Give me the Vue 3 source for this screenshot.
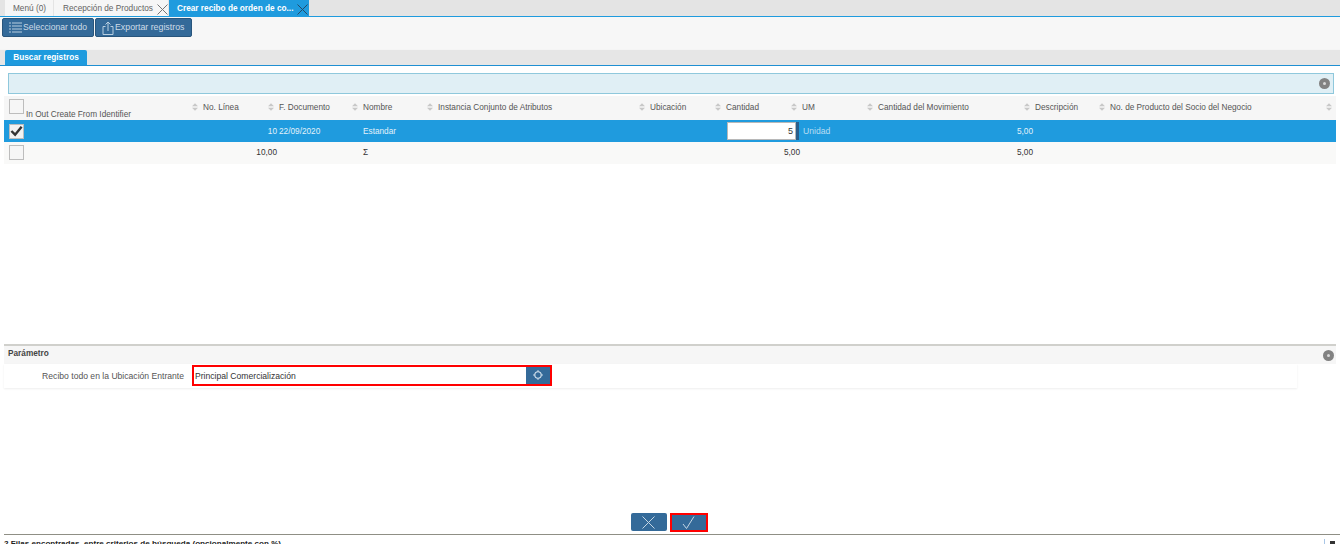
<script setup>
const columns = [
  'In Out Create From Identifier', 'No. Línea', 'F. Documento', 'Nombre',
  'Instancia Conjunto de Atributos', 'Ubicación', 'Cantidad', 'UM',
  'Cantidad del Movimiento', 'Descripción', 'No. de Producto del Socio del Negocio'
]
</script>

<template>
  <div class="page">
    <nav class="tabs">
      <div class="tab first">Menú (0)</div>
      <div class="tab second">
        <span>Recepción de Productos</span>
        <svg class="x" viewBox="0 0 11 11"><path d="M.5.5l10 10M10.5.5l-10 10" stroke="#777" fill="none" /></svg>
      </div>
      <div class="tab active">
        <span>Crear recibo de orden de co...</span>
        <svg class="x" viewBox="0 0 11 11"><path d="M.5.5l10 10M10.5.5l-10 10" stroke="#244a68" fill="none" /></svg>
      </div>
    </nav>

    <div class="toolbar">
      <button class="tool list-tool">
        <svg width="13" height="11" viewBox="0 0 13 11"><path d="M0 1h2M3 1h10M0 4h2M3 4h10M0 7h2M3 7h10M0 10h2M3 10h10" stroke="#b9cfe0" fill="none" /></svg>
        <span>Seleccionar todo</span>
      </button>
      <button class="tool export-tool">
        <svg width="12" height="14" viewBox="0 0 12 14"><path d="M3.500 5.500H1v8h10v-8H8.500M6 10V1M3.500 3.500L6 1l2.500 2.500" stroke="#b9cfe0" fill="none" /></svg>
        <span>Exportar registros</span>
      </button>
    </div>

    <div class="subtabs"><div class="subtab">Buscar registros</div></div>

    <div class="north">
      <span class="collapse"><i></i></span>
    </div>

    <section class="grid">
      <div class="row head">
        <div v-for="(c, i) in columns" :key="c" class="cell" :class="{ firsthead: i === 0 }">
          <span v-if="i === 0" class="check head-check"></span>
          <span class="label">{{ c }}</span>
          <svg class="sort" width="6" height="8" viewBox="0 0 7 9"><path d="M3.500 0L7 3.500H0zM3.500 9L0 5.500h7z" fill="#c8c8c8" /></svg>
        </div>
      </div>
      <div class="row selected">
        <div class="cell"><span class="check">
          <svg width="14" height="12" viewBox="0 0 14 12"><path d="M1.500 6l4 4L12.500 1.500" stroke="#333" stroke-width="2.600" fill="none" /></svg>
        </span></div>
        <div class="cell right">10</div>
        <div class="cell">22/09/2020</div>
        <div class="cell">Estandar</div>
        <div class="cell"></div>
        <div class="cell"></div>
        <div class="cell qty"><span class="qty-input">5</span><span class="spin"></span></div>
        <div class="cell unit">Unidad</div>
        <div class="cell right">5,00</div>
        <div class="cell"></div>
        <div class="cell"></div>
      </div>
      <div class="row foot">
        <div class="cell"><span class="check"></span></div>
        <div class="cell right">10,00</div>
        <div class="cell"></div>
        <div class="cell">Σ</div>
        <div class="cell"></div>
        <div class="cell"></div>
        <div class="cell right">5,00</div>
        <div class="cell"></div>
        <div class="cell right">5,00</div>
        <div class="cell"></div>
        <div class="cell"></div>
      </div>
    </section>

    <section class="params">
      <header class="params-head">
        <span>Parámetro</span>
        <span class="collapse"><i></i></span>
      </header>
      <div class="param-row">
        <label>Recibo todo en la Ubicación Entrante</label>
        <div class="locator">
          <span class="loc-value">Principal Comercialización</span>
          <span class="loc-btn">
            <svg width="10" height="10" viewBox="0 0 11 11"><circle cx="5.500" cy="5.500" r="3.500" stroke="#d5e3ee" stroke-width="1.200" fill="none" /><path d="M5.500 0v2M5.500 9v2M0 5.500h2M9 5.500h2" stroke="#d5e3ee" fill="none" /></svg>
          </span>
        </div>
      </div>
    </section>

    <div class="actions">
      <button class="act cancel">
        <svg width="13" height="13" viewBox="0 0 13 13"><path d="M.5.500l12 12M12.500.500l-12 12" stroke="#c4d6e4" fill="none" /></svg>
      </button>
      <button class="act ok">
        <svg width="13" height="13" viewBox="0 0 13 13"><path d="M1 8l3.500 4.500L12 .5" stroke="#c4d6e4" fill="none" /></svg>
      </button>
    </div>

    <footer class="status">
      <span>2 Filas encontradas, entre criterios de búsqueda (opcionalmente con %)</span>
      <span class="status-right"><i class="bar"></i><i class="flag"></i></span>
    </footer>
  </div>
</template>

<style scoped>
.page {
  width: 1340px;
  height: 544px;
  overflow: hidden;
  display: flex;
  flex-direction: column;
  background: #fff;
  font-family: "Liberation Sans", Arial, sans-serif;
  font-size: 8.25px;
  color: #555;
}
.tabs {
  height: 17px;
  box-sizing: border-box;
  flex: none;
  display: flex;
  align-items: stretch;
  padding-left: 5px;
  gap: 1px;
  background: #e4e4e4;
  border-bottom: 1px solid #1f9bde;
}
.tab {
  display: flex;
  align-items: center;
  white-space: nowrap;
  background: #f6f6f6;
  color: #636363;
}
.first { width: 48px; padding-left: 8px; box-sizing: border-box; }
.second { width: 114px; padding-left: 9px; box-sizing: border-box; justify-content: space-between; }
.active {
  width: 140px;
  padding-left: 8px;
  box-sizing: border-box;
  justify-content: space-between;
  background: #1f9bde;
  color: #fff;
  font-weight: 700;
}
.x { width: 11px; height: 11px; margin-top: 2px; flex: none; }
.active .x { margin-right: 1px; }
.toolbar {
  height: 32px;
  flex: none;
  box-sizing: border-box;
  display: flex;
  align-items: flex-start;
  gap: 1px;
  padding: 1px 0 0 2px;
  background: #f7f7f7;
}
.tool {
  height: 19px;
  display: flex;
  align-items: center;
  gap: 1px;
  border: 1px solid #28557c;
  border-radius: 2px;
  padding: 0 0 0 6px;
  background: #346a99;
  color: #cfdce8;
  font: inherit;
  font-size: 8.6px;
}
.tool span { margin-top: -2px; }
.list-tool { width: 92px; }
.export-tool { width: 97px; gap: 1px; font-size: 8.8px; }
.subtabs {
  height: 17px;
  flex: none;
  box-sizing: border-box;
  padding: 0 0 0 5px;
  background: #e6e6e6;
  border-top: 1px solid #f5f5f5;
  border-bottom: 1px solid #1f8fd2;
}
.subtab {
  width: 82px;
  height: 15px;
  line-height: 16px;
  text-align: center;
  border-radius: 2px 2px 0 0;
  background: #1f9bde;
  color: #fff;
  font-weight: 700;
}
.north {
  height: 21px;
  flex: none;
  box-sizing: border-box;
  margin: 7px 6px 0 8px;
  display: flex;
  align-items: center;
  justify-content: flex-end;
  padding-right: 3px;
  background: #e0eff5;
  border: 1px solid #8fc8dc;
}
.collapse {
  width: 11px;
  height: 11px;
  border-radius: 50%;
  background: #828282;
  display: flex;
  align-items: center;
  justify-content: center;
}
.collapse i {
  width: 3px;
  height: 3px;
  border-radius: 50%;
  background: #d9d9d9;
}
.grid {
  height: 248px;
  flex: none;
  margin: 2px 4px 0;
}
.row {
  display: grid;
  grid-template-columns: 198px 76px 84px 75px 212px 76px 76px 76px 157px 75px 227px;
  height: 22px;
  align-items: center;
}
.cell {
  padding: 0 1px;
  min-width: 0;
  white-space: nowrap;
  box-sizing: border-box;
}
.right { text-align: right; }
.head {
  height: 24px;
  background: #f6f6f6;
}
.head .cell {
  display: flex;
  align-items: center;
  justify-content: space-between;
  padding-right: 4px;
  margin-top: -2px;
}
.head .firsthead {
  padding-left: 5px;
  position: relative;
  height: 24px;
  margin-top: 0;
}
.head .firsthead .label { margin-left: 17px; margin-top: 12px; }
.head .firsthead .sort { margin-top: -2px; }
.head-check { position: absolute; left: 5px; top: 3px; }
.sort { flex: none; }
.check {
  width: 15px;
  height: 15px;
  box-sizing: border-box;
  display: flex;
  align-items: center;
  justify-content: center;
  background: #f6f6f6;
  border: 1px solid #bdbdbd;
  margin-left: 4px;
}
.head-check { margin-left: 0; }
.selected {
  background: #1f9bde;
  color: #e3f1fa;
}
.selected .check { background: #f2f2f2; }
.qty {
  display: flex;
  align-items: center;
  padding: 0;
}
.qty-input {
  margin-left: 2px;
  width: 69px;
  height: 18px;
  box-sizing: border-box;
  line-height: 16px;
  padding-right: 2px;
  text-align: right;
  background: #fff;
  border: 1px solid #b8b8b8;
  color: #333;
  font-size: 9px;
}
.spin {
  width: 3px;
  height: 18px;
  background: #2a5f8c;
}
.unit { color: #b8ddf3; font-size: 8.6px; padding-left: 2px; }
.foot {
  background: #f9f9f8;
  color: #333;
}
.foot .cell { margin-top: -1px; }
.params {
  height: 167px;
  flex: none;
  box-sizing: border-box;
  margin: 0 4px;
  border-top: 2px solid #d0d0cc;
}
.params-head {
  height: 18px;
  display: flex;
  align-items: center;
  justify-content: space-between;
  padding: 0 2px 0 4px;
  background: #f6f6f6;
  color: #444;
  font-weight: 700;
}
.params-head > span:first-child { margin-top: -3px; }
.param-row {
  width: 1293px;
  height: 24px;
  display: flex;
  align-items: center;
  box-shadow: 0 1px 2px #eee;
  background: #fff;
  font-size: 8.6px;
}
.param-row label {
  width: 180px;
  text-align: right;
  color: #555;
}
.locator {
  margin: 0 0 2px 8px;
  width: 360px;
  height: 21px;
  box-sizing: border-box;
  display: flex;
  align-items: stretch;
  justify-content: space-between;
  border: 2px solid #f00;
  background: #fff;
}
.loc-value { line-height: 19px; padding-left: 1px; color: #333; }
.loc-btn {
  width: 24px;
  display: flex;
  align-items: center;
  justify-content: center;
  background: #346a99;
}
.actions {
  height: 22px;
  flex: none;
  display: flex;
  justify-content: center;
  align-items: center;
  gap: 3px;
  padding-right: 2px;
}
.act {
  height: 18px;
  display: flex;
  align-items: center;
  justify-content: center;
  padding: 0;
  border: 0;
  background: #346a99;
}
.cancel { width: 36px; border-radius: 2px; }
.ok { width: 38px; height: 19px; border: 2px solid #f00; box-sizing: border-box; }
.status {
  flex: none;
  margin: 1px 0 0 4px;
  box-sizing: border-box;
  height: 12px;
  border-top: 1px solid #8f8f85;
  padding-top: 4px;
  display: flex;
  justify-content: space-between;
  color: #222;
  font-weight: 700;
  font-size: 8.1px;
}
.status-right { display: flex; gap: 5px; padding-right: 5px; }
.bar { width: 1px; height: 6px; background: #a9c6e6; }
.flag { width: 5px; height: 6px; margin-top: 2px; background: linear-gradient(#333 50%, #e08020 50%); }
</style>
